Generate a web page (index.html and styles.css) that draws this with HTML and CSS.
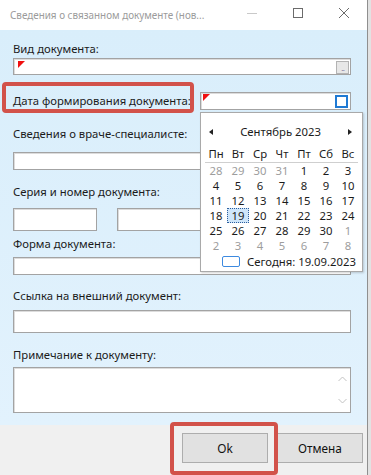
FILE: index.html
```html
<!DOCTYPE html>
<html lang="ru">
<head>
    <meta charset="UTF-8">
    <meta name="viewport" content="width=device-width, initial-scale=1.0">
    <title>Сведения о связанном документе</title>
    <link rel="stylesheet" href="styles.css">
</head>
<body>
    <div class="window">
        <div class="titlebar">
            <span class="title">Сведения о связанном документе (нов...</span>
            <div class="controls">
                <span class="ctl">
                    <svg width="10" height="10" viewBox="0 0 10 10"><path d="M0 5.5h10" stroke="#c9c9c9" stroke-width="1"/></svg>
                </span>
                <span class="ctl">
                    <svg width="10" height="10" viewBox="0 0 10 10"><rect x="0.5" y="0.5" width="9" height="9" fill="none" stroke="#6b6b6b" stroke-width="1"/></svg>
                </span>
                <span class="ctl">
                    <svg width="10" height="10" viewBox="0 0 10 10"><path d="M0 0L10 10M10 0L0 10" stroke="#6b6b6b" stroke-width="1"/></svg>
                </span>
            </div>
        </div>

        <div class="content">
            <label class="label">Вид документа:</label>
            <div class="input input-doc">
                <span class="mark"></span>
                <span class="dots-btn">...</span>
            </div>

            <div class="date-row">
                <label class="label date-label">Дата формирования документа:</label>
                <div class="input date-input">
                    <span class="mark"></span>
                    <span class="check"></span>
                    <div class="calendar">
                        <div class="cal-head">
                            <span class="arrow arrow-left"></span>
                            <span class="month">Сентябрь 2023</span>
                            <span class="arrow arrow-right"></span>
                        </div>
                        <div class="cal-grid cal-names">
                            <span>Пн</span><span>Вт</span><span>Ср</span><span>Чт</span><span>Пт</span><span>Сб</span><span>Вс</span>
                        </div>
                        <div class="cal-grid cal-days">
                            <span class="other">28</span><span class="other">29</span><span class="other">30</span><span class="other">31</span><span>1</span><span>2</span><span>3</span>
                            <span>4</span><span>5</span><span>6</span><span>7</span><span>8</span><span>9</span><span>10</span>
                            <span>11</span><span>12</span><span>13</span><span>14</span><span>15</span><span>16</span><span>17</span>
                            <span>18</span><span class="selected">19</span><span>20</span><span>21</span><span>22</span><span>23</span><span>24</span>
                            <span>25</span><span>26</span><span>27</span><span>28</span><span>29</span><span>30</span><span class="other">1</span>
                            <span class="other">2</span><span class="other">3</span><span class="other">4</span><span class="other">5</span><span class="other">6</span><span class="other">7</span><span class="other">8</span>
                        </div>
                        <div class="cal-today">
                            <span class="today-box"></span>
                            <span class="today-text">Сегодня: 19.09.2023</span>
                        </div>
                    </div>
                </div>
                <div class="annot annot-label"></div>
            </div>

            <label class="label label-doctor">Сведения о враче-специалисте:</label>
            <div class="input input-doctor"></div>

            <label class="label label-series">Серия и номер документа:</label>
            <div class="series-row">
                <div class="input input-series"></div>
                <div class="input input-number"></div>
            </div>

            <label class="label label-form">Форма документа:</label>
            <div class="input input-form"></div>

            <label class="label label-link">Ссылка на внешний документ:</label>
            <div class="input input-link"></div>

            <label class="label label-note">Примечание к документу:</label>
            <div class="input textarea">
                <div class="scroll">
                    <svg width="9" height="6" viewBox="0 0 9 6"><path d="M0.5 5L4.5 1L8.5 5" fill="none" stroke="#c2c2c2" stroke-width="1"/></svg>
                    <svg width="9" height="6" viewBox="0 0 9 6"><path d="M0.5 1L4.5 5L8.5 1" fill="none" stroke="#c2c2c2" stroke-width="1"/></svg>
                </div>
            </div>
        </div>

        <div class="footer">
            <button class="btn">Ok</button>
            <button class="btn">Отмена</button>
            <div class="annot annot-ok"></div>
        </div>
    </div>
</body>
</html>
```

FILE: styles.css
```css
body {
    margin: 0;
    background-color: #e2e2e2;
    font-family: "Noto Sans", "Open Sans", sans-serif;
    font-size: 11.3px;
    color: #1b1b1b;
}

.window {
    width: 367px;
    height: 475px;
    border-right: 1px solid #8f8f8f;
    background-color: #fff;
    display: flex;
    flex-direction: column;
}

.titlebar {
    height: 30px;
    flex-shrink: 0;
    display: flex;
    align-items: center;
    padding-left: 10px;
    background-color: #fff;
}

.title {
    flex: 1;
    font-size: 9.9px;
    color: #9b9b9b;
    white-space: nowrap;
}

.controls {
    display: flex;
    align-self: stretch;
}

.ctl {
    width: 46px;
    display: flex;
    align-items: center;
    justify-content: center;
    padding-bottom: 4px;
}

.content {
    height: 395px;
    box-sizing: border-box;
    flex-shrink: 0;
    padding: 11px 16px 0 13px;
    background: linear-gradient(to bottom, #d9eefb 0%, #e2f2fd 100%);
    display: flex;
    flex-direction: column;
}

.label {
    display: block;
    line-height: 16px;
    height: 16px;
    white-space: nowrap;
}

.input {
    box-sizing: border-box;
    background-color: #fff;
    border: 1px solid #a3a3a3;
    box-shadow: inset 1px 1px 0 #dcdcdc;
    flex-shrink: 0;
}

.mark {
    width: 0;
    height: 0;
    border-top: 7px solid #f01010;
    border-right: 7px solid transparent;
}

.input-doc {
    margin-top: 1px;
    height: 17px;
    display: flex;
    justify-content: space-between;
    align-items: flex-start;
    padding: 2px 1px 0 4px;
}

.dots-btn {
    width: 13px;
    height: 13px;
    box-sizing: border-box;
    background-color: #e7e7e7;
    border: 1px solid #b3b3b3;
    font-size: 7px;
    line-height: 13px;
    color: #8a7fa8;
    text-align: center;
    letter-spacing: -1px;
}

.date-row {
    position: relative;
    margin-top: 17px;
    height: 18px;
    display: flex;
    align-items: center;
}

.date-label {
    width: 187px;
    flex-shrink: 0;
}

.date-input {
    position: relative;
    flex: 1;
    height: 18px;
    display: flex;
    justify-content: space-between;
    align-items: center;
    padding: 0 2px 0 2px;
}

.date-input .mark {
    align-self: flex-start;
    margin-top: 1px;
}

.check {
    width: 13px;
    height: 13px;
    box-sizing: border-box;
    border: 2px solid #1f7ad4;
    background-color: #fff;
}

.calendar {
    position: absolute;
    left: -1px;
    top: 19px;
    width: 163px;
    height: 160px;
    box-sizing: border-box;
    background-color: #fff;
    border: 1px solid #a9a9a9;
    box-shadow: 1px 1px 2px rgba(0, 0, 0, 0.18);
    padding-top: 11px;
    z-index: 2;
}

.cal-head {
    height: 16px;
    display: flex;
    align-items: center;
    justify-content: space-between;
    padding: 0 10px 0 8px;
    line-height: 16px;
}

.arrow {
    width: 0;
    height: 0;
    border-top: 3px solid transparent;
    border-bottom: 3px solid transparent;
}

.arrow-left {
    border-right: 4px solid #222;
}

.arrow-right {
    border-left: 4px solid #222;
}

.cal-grid {
    display: grid;
    grid-template-columns: repeat(7, 22px);
    margin: 0 4px;
    text-align: center;
}

.cal-names {
    margin-top: 6px;
    line-height: 16px;
    height: 16px;
    border-bottom: 1px solid #cfcfcf;
}

.cal-days {
    grid-auto-rows: 15px;
    line-height: 15px;
}

.cal-days span {
    box-sizing: border-box;
}

.cal-days .other {
    color: #9d9d9d;
}

.cal-days .selected {
    background-color: #cfe6fa;
    border: 1px dotted #2c5e9e;
    line-height: 13px;
}

.cal-today {
    margin-top: 1px;
    height: 14px;
    display: flex;
    align-items: center;
    gap: 7px;
    padding-left: 21px;
}

.today-text {
    white-space: nowrap;
}

.today-box {
    width: 18px;
    height: 11px;
    flex-shrink: 0;
    box-sizing: border-box;
    border: 1px solid #3d8ae0;
    border-radius: 2px;
}

.label-doctor {
    margin-top: 16px;
}

.input-doctor {
    margin-top: 10px;
    height: 18px;
}

.label-series {
    margin-top: 14px;
}

.series-row {
    margin-top: 8px;
    display: flex;
    gap: 20px;
}

.input-series {
    width: 84px;
    height: 23px;
}

.input-number {
    width: 150px;
    height: 23px;
}

.label-form {
    margin-top: 5px;
}

.input-form {
    margin-top: 5px;
    height: 18px;
}

.label-link {
    margin-top: 13px;
}

.input-link {
    margin-top: 6px;
    height: 23px;
}

.label-note {
    margin-top: 14px;
}

.textarea {
    margin-top: 4px;
    height: 46px;
    display: flex;
    justify-content: flex-end;
}

.scroll {
    width: 16px;
    display: flex;
    flex-direction: column;
    align-items: center;
    justify-content: space-between;
    padding: 8px 0 8px;
}

.footer {
    position: relative;
    height: 42px;
    flex-shrink: 0;
    background-color: #f0f0f0;
    border-bottom: 1px solid #d6d6d6;
    display: flex;
    justify-content: flex-end;
    align-items: flex-start;
    gap: 9px;
    padding: 8px 4px 0 0;
}

.btn {
    width: 86px;
    height: 30px;
    background-color: #e1e1e1;
    border: 1px solid #adadad;
    font-family: inherit;
    font-size: 11.8px;
    color: #111;
    padding: 0;
}

.annot {
    position: absolute;
    box-sizing: border-box;
    border: 4px solid #d2524a;
    border-radius: 4px;
}

.annot-label {
    left: -11px;
    top: -10px;
    width: 192px;
    height: 31px;
}

.annot-ok {
    left: 170px;
    top: -3px;
    width: 108px;
    height: 53px;
}
```
